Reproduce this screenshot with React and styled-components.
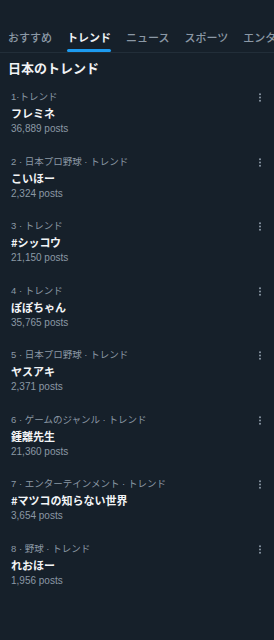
import React from 'react';
import styled, { createGlobalStyle } from 'styled-components';

const Global = createGlobalStyle`
  html, body { margin: 0; padding: 0; background: #16202a; }
  body { font-family: "Noto Sans CJK JP", "Noto Sans", sans-serif; }
`;

const Page = styled.div`
  width: 274px;
  height: 640px;
  overflow: hidden;
  background: #16202a;
  color: #f1f3f5;
`;

const Tabs = styled.div`
  display: flex;
  gap: 15px;
  padding: 29px 0 0 8px;
  border-bottom: 1px solid #222e39;
  white-space: nowrap;
  overflow: hidden;
`;

const Tab = styled.div`
  position: relative;
  flex-shrink: 0;
  font-size: 11px;
  line-height: 16px;
  padding-bottom: 7px;
  font-weight: ${(p) => (p.$active ? 700 : 500)};
  color: ${(p) => (p.$active ? '#eef1f4' : '#8b98a5')};
  &::after {
    content: '';
    display: ${(p) => (p.$active ? 'block' : 'none')};
    position: absolute;
    left: 0;
    right: 0;
    bottom: 0;
    height: 3px;
    border-radius: 2px;
    background: #1d9bf0;
  }
`;

const Heading = styled.h2`
  margin: 0;
  padding: 6px 8px 0;
  font-size: 13px;
  line-height: 18px;
  font-weight: 700;
`;

const List = styled.div`
  padding-top: 13px;
`;

const Item = styled.div`
  position: relative;
  height: 64.5px;
  padding: 0 11px;
`;

const Meta = styled.div`
  font-size: 9.5px;
  line-height: 14px;
  color: #8b98a5;
  font-family: "Liberation Sans", "Noto Sans CJK JP", sans-serif;
`;

const Name = styled.div`
  font-size: 11px;
  line-height: 18px;
  font-weight: 700;
  color: #f3f5f7;
`;

const Posts = styled.div`
  font-size: 10px;
  line-height: 14px;
  color: #8b98a5;
  font-family: "Liberation Sans", Arial, sans-serif;
`;

const More = styled.svg`
  position: absolute;
  right: 12px;
  top: 3px;
`;

const trends = [
  ['1·トレンド', 'フレミネ', '36,889 posts'],
  ['2 · 日本プロ野球 · トレンド', 'こいほー', '2,324 posts'],
  ['3 · トレンド', '#シッコウ', '21,150 posts'],
  ['4 · トレンド', 'ぽぽちゃん', '35,765 posts'],
  ['5 · 日本プロ野球 · トレンド', 'ヤスアキ', '2,371 posts'],
  ['6 · ゲームのジャンル · トレンド', '鍾離先生', '21,360 posts'],
  ['7 · エンターテインメント · トレンド', '#マツコの知らない世界', '3,654 posts'],
  ['8 · 野球 · トレンド', 'れおほー', '1,956 posts'],
];

export default function App() {
  return (
    <Page>
      <Global />
      <Tabs>
        <Tab>おすすめ</Tab>
        <Tab $active>トレンド</Tab>
        <Tab>ニュース</Tab>
        <Tab>スポーツ</Tab>
        <Tab>エンターテインメント</Tab>
      </Tabs>
      <Heading>日本のトレンド</Heading>
      <List>
        {trends.map(([meta, name, posts]) => (
          <Item key={name}>
            <Meta>{meta}</Meta>
            <Name>{name}</Name>
            <Posts>{posts}</Posts>
            <More width="4" height="9" viewBox="0 0 4 9">
              <circle cx="2" cy="1.2" r="1" fill="#8b98a5" />
              <circle cx="2" cy="4.5" r="1" fill="#8b98a5" />
              <circle cx="2" cy="7.8" r="1" fill="#8b98a5" />
            </More>
          </Item>
        ))}
      </List>
    </Page>
  );
}
